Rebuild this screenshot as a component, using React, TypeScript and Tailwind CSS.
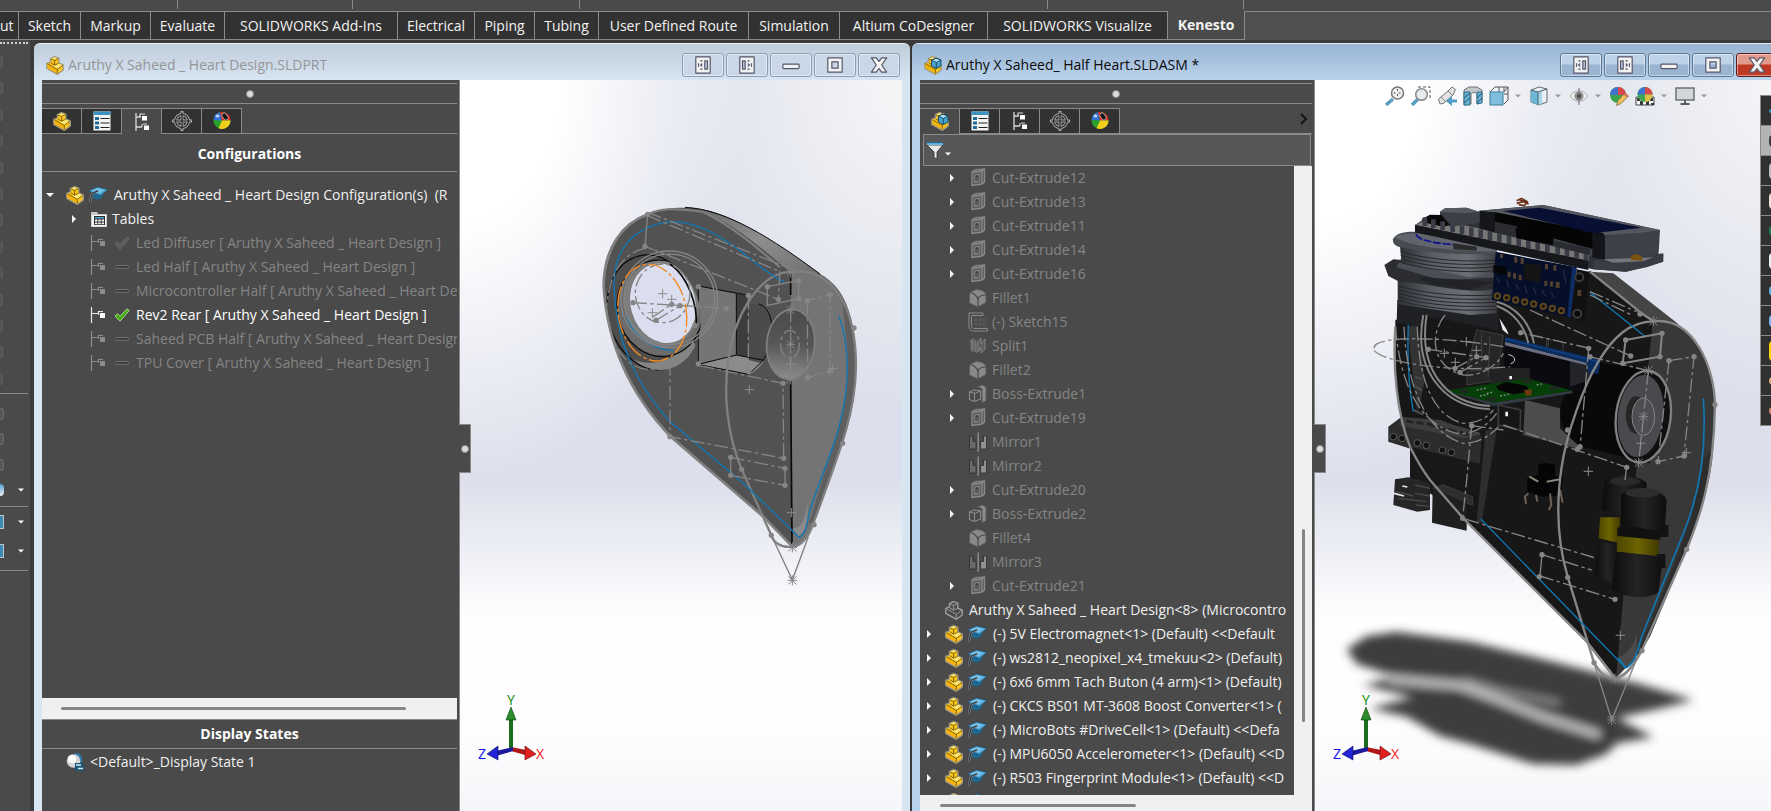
import clsx from 'clsx';
import React from 'react';

// ---------- Types ----------

type IconKind = 'cut' | 'fillet' | 'sketch' | 'split' | 'boss' | 'mirror';

interface Feature {
  name: string;
  icon: IconKind;
  open?: boolean; // has an expand arrow
}

interface Config {
  name: string;
  state: 'off' | 'built' | 'active';
}

// ---------- Data ----------

const ribbonTabs = [
  { label: 'ut', width: 'w-[19px]' },
  { label: 'Sketch', width: 'w-[62px]' },
  { label: 'Markup', width: 'w-[70px]' },
  { label: 'Evaluate', width: 'w-[74px]' },
  { label: 'SOLIDWORKS Add-Ins', width: 'w-[173px]' },
  { label: 'Electrical', width: 'w-[77px]' },
  { label: 'Piping', width: 'w-[60px]' },
  { label: 'Tubing', width: 'w-[64px]' },
  { label: 'User Defined Route', width: 'w-[150px]' },
  { label: 'Simulation', width: 'w-[91px]' },
  { label: 'Altium CoDesigner', width: 'w-[148px]' },
  { label: 'SOLIDWORKS Visualize', width: 'w-[180px]' },
];

const configs: Config[] = [
  { name: 'Led Diffuser', state: 'built' },
  { name: 'Led Half', state: 'off' },
  { name: 'Microcontroller Half', state: 'off' },
  { name: 'Rev2 Rear', state: 'active' },
  { name: 'Saheed PCB Half', state: 'off' },
  { name: 'TPU Cover', state: 'off' },
];

const features: Feature[] = [
  { name: 'Cut-Extrude12', icon: 'cut', open: true },
  { name: 'Cut-Extrude13', icon: 'cut', open: true },
  { name: 'Cut-Extrude11', icon: 'cut', open: true },
  { name: 'Cut-Extrude14', icon: 'cut', open: true },
  { name: 'Cut-Extrude16', icon: 'cut', open: true },
  { name: 'Fillet1', icon: 'fillet' },
  { name: '(-) Sketch15', icon: 'sketch' },
  { name: 'Split1', icon: 'split' },
  { name: 'Fillet2', icon: 'fillet' },
  { name: 'Boss-Extrude1', icon: 'boss', open: true },
  { name: 'Cut-Extrude19', icon: 'cut', open: true },
  { name: 'Mirror1', icon: 'mirror' },
  { name: 'Mirror2', icon: 'mirror' },
  { name: 'Cut-Extrude20', icon: 'cut', open: true },
  { name: 'Boss-Extrude2', icon: 'boss', open: true },
  { name: 'Fillet4', icon: 'fillet' },
  { name: 'Mirror3', icon: 'mirror' },
  { name: 'Cut-Extrude21', icon: 'cut', open: true },
];

const components = [
  '(-) 5V Electromagnet<1> (Default) <<Default',
  '(-) ws2812_neopixel_x4_tmekuu<2> (Default)',
  '(-) 6x6 6mm Tach Buton (4 arm)<1> (Default)',
  '(-) CKCS BS01 MT-3608 Boost Converter<1> (',
  '(-) MicroBots #DriveCell<1> (Default) <<Defa',
  '(-) MPU6050 Accelerometer<1> (Default) <<D',
  '(-) R503 Fingerprint Module<1> (Default) <<D',
];

// ---------- Icons ----------

const PartIcon: React.FC<{ gray?: boolean; assembly?: boolean }> = ({ gray, assembly }) => (
  <svg viewBox="0 0 18 19" className="h-[19px] w-[18px] shrink-0" strokeLinejoin="round">
    <path
      d="M4.500 2.600 8.500.7l4.300 1.500v5L17.200 9v5L11.400 18.300.8 12.300V7.300l3.700-1.400z"
      fill={gray ? '#4a4a4a' : '#f8c51c'}
      stroke={gray ? '#a0a0a0' : '#a39a80'}
      strokeWidth="1.400"
    />
    {!gray && <path d="M1.500 8l9.700 5.600v3.700L1.500 11.900z" fill="#f3b50c" />}
    {!gray && <path d="M4.800 2.800 8.600 1.200l3.700 1.200-3.700 1.900zM8.600 9l4-1.400 3.900 1.700-5.200 3.500L6 10z" fill="#ffe873" />}
    <path
      d="M4.800 2.900 8.600 4.400v4.800L5 7M8.600 4.400l3.900-2M8.600 9.200l4-1.800M1.400 7.700l9.900 5.600 5.500-4M11.300 13.300v4.200"
      fill="none"
      stroke={gray ? '#a0a0a0' : '#7d5a00'}
      strokeWidth=".9"
    />
    {assembly && (
      <g stroke="#12435c" strokeWidth=".9">
        <path d="M7.500 4.200 12 2.200l5 1.800v6l-4.700 2.600-4.800-2.600z" fill="#4aa3cf" />
        <path d="M7.500 4.200 12 2.200l5 1.800-4.600 2.400z" fill="#b2e0f3" />
        <path d="M12.300 6.400v6" fill="none" />
      </g>
    )}
  </svg>
);

const CapIcon = () => (
  <svg viewBox="0 0 20 18" className="h-[18px] w-5 shrink-0" strokeLinejoin="round">
    <path d="M5.500 7 5 12c2.500 2 6.500 2 9-.5l1.500-5z" fill="#1f6690" />
    <path d="M.5 5 9.500 1l10.300 2.500L12.500 9.500z" fill="#4ba4d4" stroke="#1a4b68" strokeWidth=".6" />
    <path d="M3 4.800 9.600 2l7 1.700L12 7.500z" fill="#74c0e6" />
    <path d="M10 4.800 4 7.500 2 16.500" fill="none" stroke="#9a9a9a" strokeWidth="2.200" />
    <path d="M10 4.800 4 7.500 2 16.500" fill="none" stroke="#142c3a" strokeWidth="1.100" />
  </svg>
);

const TablesIcon = () => (
  <svg viewBox="0 0 18 18" className="h-[18px] w-[18px] shrink-0">
    <path d="M1 2h6l1 2h9v13H1z" fill="#c9c9c9" />
    <path d="M2 5h14v11.500H2z" fill="#f7f7f7" />
    <rect x="4" y="6" width="11" height="9" fill="#2b2b2b" />
    <path d="M5 7h9v1.500H5z" fill="#4ba4d4" />
    <path d="M5 9.500h2.400v2H5zM8.300 9.500h2.400v2H8.300zM11.600 9.500H14v2h-2.400zM5 12.400h2.400v1.800H5zM8.300 12.400h2.400v1.800H8.300zM11.600 12.400H14v1.800h-2.400z" fill="#fff" />
  </svg>
);

const BranchIcon: React.FC<{ active: boolean }> = ({ active }) => (
  <svg viewBox="0 0 16 18" className="h-[18px] w-4 shrink-0">
    <path d="M1.500 1v16M2 7.500h6" stroke={active ? '#e8e8e8' : '#8c8c8c'} strokeWidth="1.200" />
    <path d="M8.500 9V5.500H13" fill="none" stroke={active ? '#e8e8e8' : '#8c8c8c'} strokeWidth="1.200" />
    <rect x="10" y="7" width="5" height="5" fill={active ? '#fff' : '#8c8c8c'} />
  </svg>
);

const StateIcon: React.FC<{ state: Config['state'] }> = ({ state }) => (
  <svg viewBox="0 0 16 16" className="h-4 w-4 shrink-0">
    {state === 'off' && <rect x="1.500" y="6.500" width="13" height="3" rx="1" fill="#3f3f3f" stroke="#6e6e6e" />}
    {state !== 'off' && (
      <path
        d="M1 9l2.500-2.300L6 9.300 13 1.800l2.200 1.700L6 14.300z"
        fill={state === 'active' ? '#3fae0c' : '#5a5a5a'}
        stroke={state === 'active' ? '#b8dca4' : '#6c6c6c'}
        strokeWidth=".9"
      />
    )}
  </svg>
);

const PropertyIcon = () => (
  <svg viewBox="0 0 18 20" className="h-5 w-[18px]">
    <path d="M.5.500h17v19H.5z" fill="#f4f4f4" />
    <path d="M.5.500h17v3.500H.5z" fill="#3c93c2" />
    <path d="M2 6h4v3H2zM2 10.500h4v3H2zM2 15h4v3H2z" fill="#1c6c98" />
    <path d="M7.500 7.500h9M7.500 12h9M7.500 16.500h9" stroke="#222" strokeWidth="1.200" />
  </svg>
);

const ConfigIcon = () => (
  <svg viewBox="0 0 16 20" className="h-5 w-4">
    <path d="M2 1v18M2 5h5M2 15h6" stroke="#d8d8d8" strokeWidth="1.300" fill="none" />
    <path d="M6 5V2h5M9 12h4M8 15v-3" stroke="#d8d8d8" strokeWidth="1.200" fill="none" />
    <path d="M8 4h5v4.500H8zM10 13.500h5V18h-5z" fill="#fff" />
  </svg>
);

const TargetIcon = () => (
  <svg viewBox="0 0 20 20" className="h-5 w-5" fill="none">
    <circle cx="10" cy="10" r="6.500" stroke="#a6a6a6" strokeWidth="3.200" />
    <path d="M10 0v20M0 10h20" stroke="#a6a6a6" strokeWidth="3" />
    <circle cx="10" cy="10" r="6.500" stroke="#222" strokeWidth="1.200" />
    <path d="M10 1.500v17M1.500 10h17" stroke="#222" strokeWidth="1.200" />
  </svg>
);

const BallIcon = () => (
  <svg viewBox="0 0 20 20" className="h-5 w-5">
    <circle cx="10" cy="9.500" r="8.500" fill="#2aa22a" />
    <path d="M10 9.500 8 1.200A8.500 8.500 0 0 0 1.500 9z" fill="#2f6fd6" />
    <path d="M10 9.500 8 1.200a8.500 8.500 0 0 1 10.500 8z" fill="#e02020" />
    <path d="M10 9.500h8.500a8.500 8.500 0 0 1-12 7.700z" fill="#f2cf1b" />
    <ellipse cx="13" cy="5.500" rx="2.500" ry="4" transform="rotate(-38 13 5.500)" fill="#161616" stroke="#eee" strokeWidth=".6" />
    <ellipse cx="5.500" cy="5" rx="2" ry="1.500" fill="#fff" opacity=".7" />
  </svg>
);

const StateBallIcon = () => (
  <svg viewBox="0 0 18 19" className="h-[19px] w-[18px] shrink-0">
    <path d="M8 1.500c5-2 9 2 8 8l-4 3z" fill="#2d7ca6" />
    <circle cx="7.500" cy="9" r="6.800" fill="#d5d5d5" />
    <circle cx="6" cy="7" r="4" fill="#fff" />
    <path d="M9 11h8.500v8H9z" fill="#1c5674" />
    <path d="M10 13h5M12 16.500h5" stroke="#d3eefb" strokeWidth="1.500" />
  </svg>
);

const FilterIcon = () => (
  <svg viewBox="0 0 18 19" className="h-[19px] w-[18px]">
    <path d="M1 4h16l-6 7v7l-3-1.500V11z" fill="#e8e8e8" stroke="#2e2e2e" strokeWidth=".8" />
    <path d="M1 1h16v3H1z" fill="#69b9df" />
    <path d="M1 1h16v1.200H1z" fill="#1d6e98" />
  </svg>
);

const FeatureIcon: React.FC<{ kind: IconKind }> = ({ kind }) => (
  <svg viewBox="0 0 20 20" className="h-5 w-5 shrink-0" fill="none" stroke="#8a8a8a" strokeLinejoin="round">
    {kind === 'cut' && (
      <>
        <path d="M4 4.500 14 3v13L4 17.500zM4 4.500l3-2.700 9.500-1V14L14 16M14 3l2.500-2" fill="#5c5c5c" strokeWidth="1.300" />
        <path d="M6.800 7 11.200 6.300v7l-4.400.8z" fill="#3a3a3a" strokeWidth="1.200" />
        <path d="M9 9v5" stroke="#7a7a7a" strokeWidth="1" />
      </>
    )}
    {kind === 'fillet' && (
      <>
        <path d="M1.500 4.500 8 1.500c5 0 10 2 10 6v7L10 19l-8.500-4z" fill="#8a8a8a" stroke="#5d5d5d" />
        <path d="M10 19V12c0-3 3-5 8-5M10 12C9 7 6 5 1.500 4.500" stroke="#474747" strokeWidth="1.200" />
      </>
    )}
    {kind === 'sketch' && (
      <>
        <path d="M8 4v12M12 4v12M16 5v11M4 8h15M4 12h15" stroke="#616161" strokeWidth=".8" />
        <path d="M15 1H1v13c0 3.500 1.500 5 4.500 5H19.500v-2.500H6.500c-2 0-3-1-3-3V3.500H15z" fill="#4a4a4a" strokeWidth="1" />
      </>
    )}
    {kind === 'split' && (
      <>
        <path d="M2 4l4-2v13l-3 1zM6 3l3 2v13l-3-3" fill="#777" stroke="#5a5a5a" strokeWidth=".9" />
        <path d="M10 5l3-3v6l4-5v10l-4 4v-6l-3 5z" fill="#5c5c5c" strokeWidth=".9" />
      </>
    )}
    {kind === 'boss' && (
      <>
        <path d="M9 3l5-2 4 2v14l-4 1.500V4.500z" fill="#8a8a8a" stroke="#5a5a5a" />
        <path d="M1.500 8l5-2 6 1v8l-6 2.500-5-2z" fill="#484848" strokeWidth="1.100" />
        <path d="M1.500 8l5 1.500 6-2.500M6.500 9.500v8" strokeWidth="1.100" />
      </>
    )}
    {kind === 'mirror' && (
      <>
        <path d="M1.500 4v13H8V9.500H5V4z" fill="#6a6a6a" stroke="#333" strokeWidth=".9" />
        <path d="M18.500 4v13H12.500V9.500h3V4z" fill="#909090" stroke="#333" strokeWidth=".9" />
        <path d="M10.200.500v19" strokeWidth="1.500" />
      </>
    )}
  </svg>
);

const Expander: React.FC<{ down?: boolean; hidden?: boolean }> = ({ down, hidden }) => (
  <svg viewBox="0 0 8 10" className={clsx('h-2.5 w-2 shrink-0', hidden && 'invisible')}>
    <path d={down ? 'M0 3h8L4 7z' : 'M2 1l4 4-4 4z'} fill="#f5f5f5" />
  </svg>
);

const Caret: React.FC<{ color: string }> = ({ color }) => (
  <svg viewBox="0 0 6 4" className="h-1 w-1.5 shrink-0">
    <path d="M0 .5h6l-3 3z" fill={color} />
  </svg>
);

// ---------- Window chrome ----------

const captionIcons: Record<string, React.ReactNode> = {
  'Dock left': (
    <>
      <path d="M3 1h16v18H3z" />
      <path d="M13 5.500h3v9h-3z" fill="#b8c8dc" />
      <path d="M10.500 5.500H8M6 8v4M8 14.500h2.500" fill="none" />
      <path d="M10 7.500v5L7.500 10z" fill="#55566b" stroke="none" />
    </>
  ),
  'Dock right': (
    <>
      <path d="M3 1h16v18H3z" />
      <path d="M6 5.500h3v9H6z" fill="#b8c8dc" />
      <path d="M11.500 5.500H14M16 8v4M14 14.500h-2.500" fill="none" />
      <path d="M12 7.500v5l2.500-2.500z" fill="#55566b" stroke="none" />
    </>
  ),
  Minimize: <rect x="2" y="9" width="18" height="5" rx="1" />,
  Maximize: <path fillRule="evenodd" d="M3 2h16v16H3zM7.500 6.500v7h7v-7z" />,
  Close: <path d="M2.500 2h5.500L11 6l3-4h5.500l-5.500 8 5.500 8H14l-3-4-3 4H2.500L8 10z" />,
};

const Caption: React.FC<{ title: string; active?: boolean }> = ({ title, active }) => (
  <header
    className={clsx(
      'flex h-[37px] shrink-0 items-center rounded-t-md border-t pt-1.5',
      active
        ? 'border-[#dfeaf6] bg-linear-to-b from-[#98b4d2] to-[#bad3ec]'
        : 'border-[#eef3f8] bg-linear-to-b from-[#bfcddb] to-[#d7e5f3]',
    )}
  >
    <div className="flex min-w-0 flex-1 items-center gap-1 pl-3">
      <PartIcon assembly={active} />
      <h2 className={clsx('truncate text-sm', active ? 'text-[#0a0a0a]' : 'text-[#959595]')}>{title}</h2>
    </div>
    <div className="flex gap-0.5 pr-2.5">
      {Object.entries(captionIcons).map(([name, shape]) => (
        <button
          key={name}
          aria-label={name}
          className={clsx(
            'flex h-6 w-[42px] items-center justify-center rounded-[3px] border shadow-[inset_0_0_0_1px_rgba(255,255,255,0.45)]',
            !active && 'border-[#8c9db8] bg-[#c9d7e6]',
            active && name !== 'Close' && 'border-[#5f7896] bg-linear-to-b from-[#bed2e8] from-45% to-[#9ab4d2] to-50%',
            active && name === 'Close' && 'border-[#5e1a1a] bg-linear-to-b from-[#e09a8c] from-45% to-[#bf3a24] to-50%',
          )}
        >
          <svg viewBox="0 0 22 20" className="h-[18px] w-5" fill="#f2f2f2" stroke="#55566b" strokeWidth="1.300" strokeLinejoin="round">
            {shape}
          </svg>
        </button>
      ))}
    </div>
  </header>
);

const ManagerTabs: React.FC<{ selected: number; assembly?: boolean }> = ({ selected, assembly }) => {
  const tabs = [
    <PartIcon assembly={assembly} />,
    <PropertyIcon />,
    <ConfigIcon />,
    <TargetIcon />,
    <BallIcon />,
  ];
  const names = ['Feature tree', 'Properties', 'Configurations', 'Dimensions', 'Appearances'];
  return (
    <div className="mr-0.5 flex items-end border-b border-[#8a8a8a]">
      {tabs.map((icon, i) => (
        <button
          key={names[i]}
          aria-label={names[i]}
          className={clsx(
            '-mb-px flex h-[26px] w-10 items-center justify-center border-t border-r border-[#8a8a8a]',
            i === selected ? 'bg-[#4a4a4a]' : 'border-b bg-[#323232]',
          )}
        >
          {icon}
        </button>
      ))}
      {assembly && (
        <button aria-label="More tabs" className="mr-1 mb-2 ml-auto">
          <svg viewBox="0 0 8 12" className="h-3 w-2" fill="none" stroke="#141414" strokeWidth="2">
            <path d="M1 1l5 5-5 5" />
          </svg>
        </button>
      )}
    </div>
  );
};

const Knob = () => <span className="h-2 w-2 rounded-full border border-[#8e8e8e] bg-[#dcdcdc]" />;

const PanelGrip = () => (
  <div className="mt-[3px] mr-0.5 mb-1 flex h-[21px] shrink-0 items-center justify-center border-y border-[#8a8a8a]">
    <Knob />
  </div>
);

const SideHandle = () => (
  <button
    aria-label="Collapse panel"
    className="absolute top-[344px] -left-px flex h-[49px] w-3 items-center justify-center border border-l-0 border-[#8a8a8a] bg-[#4a4a4a]"
  >
    <Knob />
  </button>
);

// ---------- Drawing helpers ----------

const Dots: React.FC<{ at: number[][] }> = ({ at }) => (
  <g fill="#858585">
    {at.map(([x, y]) => (
      <circle key={`${x}-${y}`} cx={x} cy={y} r="8" />
    ))}
  </g>
);

const Crosses: React.FC<{ at: number[][] }> = ({ at }) => (
  <g stroke="#8c8c8c" strokeWidth="3">
    {at.map(([x, y]) => (
      <path key={`${x}-${y}`} d={`M${x - 14} ${y}h28M${x} ${y - 14}v28`} />
    ))}
  </g>
);

const Stars: React.FC<{ at: number[][] }> = ({ at }) => (
  <g stroke="#858585" strokeWidth="3">
    {at.map(([x, y]) => (
      <path key={`${x}-${y}`} d={`M${x - 14} ${y}h28M${x} ${y - 15}v30M${x - 12} ${y - 12}l24 24M${x + 12} ${y - 12}l-24 24`} />
    ))}
  </g>
);

// Axis letters with the arrows between them
const AxisTriad = () => (
  <div className="absolute bottom-[50px] left-[18px] grid grid-cols-[8px_50px_8px] text-sm leading-none">
    <span className="col-start-2 justify-self-center text-[#0a8a0a]">Y</span>
    <span className="col-start-1 row-start-2 self-end text-[#1414f0]">Z</span>
    <svg viewBox="0 0 50 54" className="col-start-2 row-start-2 h-[54px] w-[50px]">
      <path d="M23 10h4v34h-4z" fill="#1b6e1b" />
      <path d="M25 0l5 13H20z" fill="#2a8c2a" stroke="#0c3d0c" strokeWidth=".6" />
      <path d="M25 40l15 3-1 5-14-4z" fill="#b01616" />
      <path d="M39 39l11 8-11 6z" fill="#e32020" stroke="#5a0d0d" strokeWidth=".6" />
      <path d="M27 40 10 44v5l17-5z" fill="#1a1a9c" />
      <path d="M12 39 1 47l11 6z" fill="#2323d8" stroke="#0b0b55" strokeWidth=".6" />
    </svg>
    <span className="col-start-3 row-start-2 self-end text-[#f01414]">X</span>
  </div>
);

// Heart half opened in the part window
const HeartModel = () => (
  <svg viewBox="0 0 1020 1260" className="absolute top-[100px] left-[100px] h-[420px] w-[340px]" fill="none">
    <defs>
      <linearGradient id="bevel" x1="0" y1="0" x2="1" y2="1">
        <stop offset="0" stopColor="#6a6a6a" />
        <stop offset=".5" stopColor="#8e8e8e" />
        <stop offset="1" stopColor="#6f6f6f" />
      </linearGradient>
      <linearGradient id="bore" x1="0" y1="0" x2="0" y2="1">
        <stop offset="0" stopColor="#4a4a4a" />
        <stop offset=".5" stopColor="#565656" />
        <stop offset="1" stopColor="#8d8d8d" />
      </linearGradient>
      <clipPath id="ring">
        <ellipse cx="285" cy="400" rx="135" ry="172" transform="rotate(-14 285 400)" />
      </clipPath>
    </defs>

    {/* body */}
    <path
      d="M263 103C300 86 340 82 400 84C500 90 640 180 780 282C850 320 888 400 888 560C888 700 850 790 760 1030C740 1075 725 1098 697 1100L610 1010L330 768C200 630 140 460 131 320C140 200 190 130 263 103Z"
      fill="#525252"
    />
    <path d="M400 84C500 90 640 180 780 282L690 275C620 220 540 140 430 96Z" fill="url(#bevel)" />
    <path d="M375 82C500 88 640 178 780 282" stroke="#0a0a0a" strokeWidth="3" />
    <path d="M692 275C790 265 888 330 888 560C888 700 850 790 760 1030C740 1075 725 1098 697 1100Z" fill="#747474" />
    <path d="M862 500C868 640 850 720 800 860C770 950 760 1000 745 1030L760 1030C850 790 888 700 888 560C888 470 870 400 845 350Z" fill="#5f5f5f" />
    <path d="M697 1045C725 1045 735 1020 745 960L740 1040L716 1070Z" fill="#8b8b8b" />

    {/* pocket and wall */}
    <path d="M415 318L529 342V525L415 553Z" fill="#757575" />
    <path d="M529 342L566 348L566 575L529 525Z" fill="#3d3d3d" />
    <path d="M529 525L612 541C600 565 580 578 566 583L420 553Z" fill="#8b8b8b" />
    <path d="M566 372H596C660 400 645 520 600 548L566 540Z" fill="#4b4b4b" />
    <path d="M596 372C650 385 645 500 603 548L566 583" stroke="#0a0a0a" strokeWidth="3" />
    <path d="M529 342V525L415 553V318L566 346M529 525L612 541M420 555L566 583" stroke="#0a0a0a" strokeWidth="3" />
    <ellipse cx="692" cy="493" rx="72" ry="105" transform="rotate(5 692 493)" fill="url(#bore)" stroke="#808080" strokeWidth="5" />

    {/* lens bore */}
    <ellipse cx="278" cy="397" rx="134" ry="174" transform="rotate(-14 278 397)" fill="#4d4d4d" stroke="#0a0a0a" strokeWidth="4" />
    <g clipPath="url(#ring)">
      <path d="M190 520C240 565 330 560 400 480L420 540L320 600L200 560Z" fill="#848484" />
      <ellipse cx="300" cy="385" rx="128" ry="145" transform="rotate(-12 300 385)" fill="#6c6c6c" stroke="#0a0a0a" strokeWidth="4" />
      <ellipse cx="305" cy="372" rx="112" ry="130" transform="rotate(-10 305 372)" fill="#7d7d7d" />
    </g>
    <ellipse cx="309" cy="370" rx="97" ry="121" transform="rotate(-16 309 370)" fill="#dadeee" />
    <path d="M330 252C385 290 415 380 408 440" stroke="#0a0a0a" strokeWidth="5" />
    <path d="M198 400C215 470 270 505 340 512" stroke="#0f77b4" strokeWidth="4" />

    {/* outline */}
    <path d="M263 103C190 130 131 200 131 320C140 460 190 620 330 768L610 1010L697 1100" stroke="#808080" strokeWidth="8" />
    <path d="M263 103C300 86 340 82 430 96C520 140 600 210 660 262" stroke="#808080" strokeWidth="6" />
    <path d="M692 275C820 260 888 380 888 560C886 690 850 790 760 1030C745 1075 720 1100 697 1100C660 1105 640 1085 634 1066L545 868C500 760 490 640 505 540C520 420 590 280 692 275" stroke="#808080" strokeWidth="7" />
    <path d="M692 275V345M692 600L696 1092" stroke="#0a0a0a" strokeWidth="5" />
    <path d="M634 1066L697 1200L745 1070" stroke="#808080" strokeWidth="4" />

    {/* blue spline */}
    <path
      d="M675 308C600 270 560 220 500 185C420 130 340 110 270 140C200 170 160 230 162 320C168 470 210 590 330 725L550 910L690 1045L716 1072C735 1065 738 1050 750 990C790 860 862 740 862 560C860 490 850 440 836 408"
      stroke="#0f77b4"
      strokeWidth="4"
    />

    {/* sketch geometry */}
    <g stroke="#858585" strokeWidth="4">
      <circle cx="328" cy="358" r="136" />
      <circle cx="328" cy="358" r="145" />
      <path d="M263 103L255 199M622 320L716 302V356L622 376ZM512 832V886M675 865V916" />
      <g strokeDasharray="42 10 10 10">
        <path d="M263 97L690 265M263 107L660 275M255 199L655 358M330 545V770L671 835L669 610L415 556M512 832L675 865M512 886L675 916M565 346V580M660 272L655 358M742 362L743 593L810 574V344L742 362M330 545C260 600 160 560 140 400C140 300 180 220 255 205M692 385V600M219 368L499 385M277 412L335 373M288 421L360 377" />
        <ellipse cx="308" cy="340" rx="82" ry="88" />
        <ellipse cx="690" cy="493" rx="28" ry="42" />
      </g>
    </g>
    <ellipse cx="277" cy="398" rx="102" ry="146" transform="rotate(-10 277 398)" stroke="#f58a1f" strokeWidth="4" strokeDasharray="60 8 10 8" />
    <Dots at={[[263, 103], [255, 199], [565, 346], [655, 358], [622, 320], [716, 302], [716, 356], [330, 545], [330, 770], [671, 835], [669, 610], [512, 832], [512, 886], [675, 865], [675, 916], [545, 868], [634, 1066], [762, 1034], [848, 790], [882, 444], [742, 362], [743, 593], [810, 574], [810, 344], [219, 368], [360, 377], [335, 373], [288, 421], [405, 436], [499, 385], [415, 320], [415, 552], [566, 575]]} />
    <Crosses at={[[308, 341], [335, 358], [277, 398], [568, 629], [692, 553], [694, 998], [818, 566]]} />
    <Stars at={[[692, 278], [691, 390], [691, 493], [691, 598], [697, 1102], [697, 1201]]} />
  </svg>
);

// Full assembly with its electronics and floor shadow
const AssemblyModel = () => (
  <svg viewBox="0 0 1323 1893" className="absolute top-[100px] left-[15px] h-[631px] w-[441px]" fill="none">
    <defs>
      <filter id="soft" x="-10%" y="-20%" width="120%" height="140%">
        <feGaussianBlur stdDeviation="14" />
      </filter>
      <linearGradient id="steel" x1="0" y1="0" x2="1" y2="0">
        <stop offset="0" stopColor="#2f3136" />
        <stop offset=".35" stopColor="#5b5e66" />
        <stop offset=".7" stopColor="#6d6f76" />
        <stop offset="1" stopColor="#3c3e44" />
      </linearGradient>
      <linearGradient id="can" x1="0" y1="0" x2="1" y2="0">
        <stop offset="0" stopColor="#0c0c0c" />
        <stop offset=".5" stopColor="#242424" />
        <stop offset="1" stopColor="#0e0e0e" />
      </linearGradient>
      <linearGradient id="band" x1="0" y1="0" x2="1" y2="0">
        <stop offset="0" stopColor="#4c4600" />
        <stop offset=".5" stopColor="#6e6500" />
        <stop offset="1" stopColor="#3f3a00" />
      </linearGradient>
    </defs>

    {/* floor shadow */}
    <g filter="url(#soft)">
      <path
        d="M50 1408L110 1368L200 1355L420 1385L600 1428L800 1478L940 1515L1090 1560L980 1588L860 1614L970 1672L860 1690L830 1722L740 1755L610 1752L420 1692L330 1668L230 1610L120 1585L250 1552L100 1515L200 1490L80 1452Z"
        fill="#3e3e3e"
      />
      <path d="M180 1496L300 1508L390 1516L500 1556L640 1612L810 1665" stroke="#c6c6c6" strokeWidth="24" />
      <path d="M400 1500L520 1535L690 1570" stroke="#8c8c8c" strokeWidth="18" />
    </g>

    {/* body */}
    <path d="M780 273L1040 430L1000 900L860 1495L770 1380L400 1015L300 900C240 800 196 700 196 560V420L500 350L640 330Z" fill="#171717" />
    <path d="M780 275L850 280L1045 432L968 424Z" fill="#454545" />
    <path d="M968 424C1090 410 1155 560 1155 680C1150 900 1110 1010 1070 1108L935 1412L858 1495L880 1250L920 860L955 560Z" fill="#383838" />
    <path d="M1120 840C1100 1010 1010 1210 940 1380L922 1430L960 1370L1070 1108C1110 1010 1145 900 1150 800Z" fill="#2d2d2d" />
    <path d="M868 1430C900 1420 910 1390 922 1360L918 1440L885 1464Z" fill="#4a4a4a" />
    <path d="M585 660L690 685V745L760 810L580 765Z" fill="#4c4c4c" />
    <path d="M232 440L262 435L285 600L262 700Z" fill="#333" />
    <path d="M467 750L500 750L455 1030L440 1025Z" fill="#2e2e2e" />

    {/* inside of the lens bore */}
    <path d="M440 450L520 465L500 600L410 615L412 560Z" fill="#262626" stroke="#3d3d3d" strokeWidth="3" />
    <path d="M455 460v70M480 470l-6 120M420 570h90M610 465l40 10v28l-38-8zM655 478l44 8v30l-44-8z" stroke="#444" strokeWidth="3" />
    <path d="M255 590l20 8M258 620l18 12M250 690l30 14M300 720l60 24M380 740l70 22" stroke="#4c4c4c" strokeWidth="6" />

    {/* terminal blocks */}
    <path d="M175 740L215 710L330 720L455 770L450 850L380 850L175 785Z" fill="#2c2c2c" />
    <path d="M215 712L330 720L455 765L400 775L205 735Z" fill="#3d3d3d" />
    <path d="M230 722l20 6M260 726l20 6M290 730l24 8M325 740l20 8M355 748l24 8M390 756l24 8" stroke="#232323" strokeWidth="9" />
    <g fill="#111" stroke="#5a5a5a" strokeWidth="3">
      <circle cx="190" cy="770" r="10" />
      <circle cx="216" cy="775" r="10" />
      <circle cx="262" cy="789" r="10" />
      <circle cx="289" cy="796" r="10" />
      <circle cx="337" cy="810" r="10" />
      <circle cx="364" cy="817" r="10" />
    </g>
    <path d="M240 800L440 850L420 1020L240 900Z" fill="#181818" />
    <path d="M195 898L235 892L300 910V990L262 995L190 975Z" fill="#262626" />
    <path d="M200 935L250 948M205 955L290 965M255 915l45 10M255 940l45 8M258 975l40 4" stroke="#4a4a4a" strokeWidth="4" />
    <path d="M217 918L232 921M192 940l30 8" stroke="#e9e9e9" strokeWidth="5" />
    <path d="M308 925L410 945V1052L306 1028Z" fill="#1f1f1f" />
    <path d="M308 925L340 915L428 950V975L410 970" fill="#2e2e2e" stroke="#484848" strokeWidth="2" />

    {/* fingerprint module */}
    <path d="M202 360L505 365L505 450L280 405L275 440L200 428Z" fill="#202125" />
    <path d="M203 300L497 320L500 400L420 405L203 372Z" fill="url(#steel)" />
    <path d="M163 255L190 238L330 250L500 280V325C440 345 330 320 260 310L205 304L175 288Z" fill="#2b2d31" />
    <path d="M205 248L500 262L497 292L400 298L330 300L200 262Z" fill="#4b4e55" />
    <path d="M260 290L400 300L495 305L420 330L300 312Z" fill="#212327" />
    <path d="M210 200L500 215V282L420 292L215 250Z" fill="url(#steel)" />
    <g stroke="#25272b" strokeWidth="3">
      <path d="M212 215C300 240 400 248 500 240M212 226C300 252 400 258 500 250M212 237C300 262 400 270 500 260M214 248C300 272 400 280 500 272" />
      <path d="M205 318C300 345 400 350 498 345M205 329C300 356 400 362 498 356M205 340C300 368 400 372 498 367M205 351C300 378 400 382 498 378M207 362C300 388 400 394 498 389" />
    </g>
    <path d="M189 178C200 150 260 150 330 165L500 205V222C400 225 300 220 205 200C192 195 188 188 189 178Z" fill="#484b52" />
    <path d="M195 172C230 150 300 160 500 205V215C400 215 250 205 195 172Z" fill="#62656d" />
    <path d="M258 163C262 178 300 188 370 194" stroke="#0c0c90" strokeWidth="5" strokeDasharray="24 5" />
    <path d="M370 190L440 200V212L370 208Z" fill="#2b2b2b" />

    {/* controller board */}
    <path d="M255 135L300 105L460 130L790 200L1000 225L998 245L890 275L790 268L255 155Z" fill="#2f3138" />
    <path d="M255 135L300 115L780 215L775 242Z" fill="#777" />
    <path d="M255 135L775 242V270L255 157Z" fill="#17181b" />
    <path d="M330 95L345 85L410 83L447 95V130L360 140L330 110Z" fill="#3b3e46" />
    <path d="M330 95L345 85L410 83L447 95L400 100Z" fill="#565962" />
    <path d="M275 118L300 104L335 105L360 135L340 140L285 128Z" fill="#090909" />
    <g fill="#3a3d45">
      {[285, 310, 338, 368, 396, 424, 452, 480, 508, 537, 566, 595, 623, 652, 683, 711, 740, 768].map((x, i) => (
        <path key={x} d={`M${x - 7} ${112 + i * 6}h14v26h-14z`} />
      ))}
    </g>
    <path d="M448 92L640 75L990 150L985 235L825 238L448 140Z" fill="#3d4049" />
    <path d="M448 92L495 97V158L448 145Z" fill="#15161a" />
    <path d="M448 92L640 75L990 150L935 158L825 165L495 97Z" fill="#54575f" />
    <path d="M495 97L820 160V215L495 128Z" fill="#050505" />
    <path d="M520 93L630 83L935 143L790 160Z" fill="#070f33" />
    <path d="M495 125L560 138V160L780 205V225L495 158Z" fill="#2a2c31" />
    <path d="M556 145L672 165L668 195L560 175Z" fill="#050505" />
    <path d="M787 158L825 165V240L787 232Z" fill="#14151a" />
    <path d="M560 62L575 55L592 66L583 77L566 74M566 58L596 72M560 70L590 62" stroke="#6a2c15" strokeWidth="5" />
    <path d="M790 240L890 235L1000 220V245L950 262L885 275L790 268Z" fill="#393c44" />
    <path d="M820 238L970 232L940 244L850 248Z" fill="#75777b" />
    <path d="M903 240V227L920 222L935 228L938 242Z" fill="#7a5410" />

    {/* accelerometer board */}
    <path d="M497 215L740 262L718 412L486 360Z" fill="#060f28" />
    <path d="M726 262L740 265L722 412L712 410Z" fill="#0d2c66" />
    <path d="M740 268L776 275L765 425L722 415Z" fill="#101010" />
    <path d="M583 250L635 256L630 308L580 298Z" fill="#151515" />
    <path d="M490 255L528 260V284L490 278Z" fill="#070707" />
    <g fill="#4f3f30">
      <path d="M553 230h9v18h-9zM572 234h9v18h-9zM533 275h9v16h-9zM549 280h9v16h-9zM566 284h9v16h-9zM645 252h9v16h-9zM670 256h9v16h-9zM643 302h9v16h-9zM660 304h9v16h-9zM677 306h12v18h-12zM510 222h9v12h-9zM742 330h12v18h-12z" />
    </g>
    <path d="M500 292l8 14M530 298l6 24M556 312l10 16M584 318l8 22M610 322l8 22M636 330l10 18M664 336l8 18M700 270l8 40" stroke="#1e2a48" strokeWidth="4" />
    <g fill="#151005" stroke="#5c4620" strokeWidth="6">
      {[[502, 348], [530, 353], [557, 360], [584, 366], [611, 372], [640, 379], [667, 385], [694, 392]].map(([x, y]) => (
        <circle key={x} cx={x} cy={y} r="8" />
      ))}
    </g>
    <g fill="#0a0a0a" stroke="#3c3c3c" strokeWidth="6">
      <circle cx="748" cy="292" r="12" />
      <circle cx="742" cy="401" r="12" />
    </g>

    {/* magnet */}
    <path d="M790 545L965 570L960 850L760 800C690 770 680 700 700 655C720 600 760 560 790 545Z" fill="#090909" />
    <ellipse cx="940" cy="710" rx="82" ry="138" transform="rotate(7 940 710)" fill="#101010" stroke="#808080" strokeWidth="7" />
    <ellipse cx="932" cy="708" rx="68" ry="124" transform="rotate(7 932 708)" fill="#484a4d" />
    <ellipse cx="918" cy="705" rx="30" ry="56" fill="#262626" />
    <ellipse cx="940" cy="710" rx="34" ry="56" fill="#4c4e51" stroke="#858585" strokeWidth="3" />

    {/* boost converter and driver */}
    <path d="M525 495L765 545L755 640L620 610L520 560Z" fill="#0b0b0f" />
    <path d="M720 540L790 545L780 600L720 620Z" fill="#23242a" />
    <path d="M525 485L770 548V556L525 496Z" fill="#6b6e80" />
    <path d="M525 472L545 475L812 540L805 582L775 578L770 548L525 485Z" fill="#0b2c5c" />
    <path d="M525 476L805 545" stroke="#114488" strokeWidth="4" />
    <path d="M508 415C522 435 532 450 536 464L518 450Z" fill="#e8e8ee" />
    <path d="M535 524C555 526 562 545 542 551" stroke="#d8d8d8" strokeWidth="3" />
    <path d="M480 560L600 565V605L480 620Z" fill="#222" />
    <path d="M505 675L572 690L570 750L505 735Z" fill="#151515" stroke="#3c3c3c" strokeWidth="5" />
    <path d="M526 695h8v14h-8zM538 588h8v10h-8z" fill="#f3f3f3" />
    <path d="M345 632L590 595L727 632L490 668Z" fill="#063f08" />
    <path d="M345 632L490 668L727 632V640L490 678Z" fill="#343a44" />
    <g fill="#1d2a1f">
      <ellipse cx="402" cy="634" rx="16" ry="6" />
      <ellipse cx="590" cy="604" rx="16" ry="6" />
      <ellipse cx="484" cy="657" rx="16" ry="6" />
      <ellipse cx="672" cy="625" rx="16" ry="6" />
    </g>
    <path d="M440 630l30 -6M450 648l24 -5M620 615l20 -4M510 648l30 -6M470 640l20 -4" stroke="#7d8c7d" strokeWidth="4" strokeDasharray="6 5" />
    <path d="M498 618L530 606L590 618L598 635L550 643L505 630Z" fill="#060606" />
    <path d="M582 630L605 628V645L588 648Z" fill="#6b3a10" />

    {/* push button */}
    <path d="M592 893L625 885V852L650 849L675 854V888L700 895L690 945L640 950L592 935Z" fill="#050505" />
    <path d="M598 890L625 905L612 898M650 905L690 898" stroke="#8d857c" strokeWidth="6" />
    <path d="M595 940L585 950L588 972M618 945L622 965M660 940L664 975L656 990M690 930L698 968" stroke="#6d625a" strokeWidth="6" />

    {/* capacitors */}
    <path d="M822 908C835 880 930 880 950 910L945 1035L815 990Z" fill="url(#can)" />
    <ellipse cx="885" cy="904" rx="46" ry="12" fill="#2a2a2a" />
    <path d="M810 1012H870V1090L806 1075Z" fill="url(#band)" />
    <path d="M805 1085L870 1095L860 1215L793 1185Z" fill="url(#can)" />
    <path d="M873 945C890 915 990 915 1010 960L1005 1040L985 1072L873 1050Z" fill="url(#can)" />
    <ellipse cx="938" cy="938" rx="52" ry="14" fill="#2e2e2e" />
    <path d="M862 1062L988 1076L985 1128L860 1115Z" fill="url(#band)" />
    <path d="M862 1044L880 1036L1000 1056L988 1080L862 1068Z" fill="#111" />
    <path d="M860 1115L1000 1130L985 1235C960 1260 880 1255 845 1228Z" fill="url(#can)" />
    <path d="M985 1035h30v36h-30zM980 1122h26v42h-26z" fill="#131313" />

    {/* outlines */}
    <g stroke="#868686" strokeWidth="7">
      <path d="M196 440C188 560 200 700 240 800C270 860 285 880 300 900L400 1015L770 1385L855 1495" />
      <path d="M780 275L935 400L970 424C1090 410 1155 560 1155 680C1150 900 1110 1010 1070 1108L935 1412C915 1450 890 1490 855 1495C820 1495 805 1470 792 1448L713 1190C680 1080 680 960 695 860C710 760 760 620 805 545C850 470 900 425 970 424" />
    </g>
    <path d="M792 1448L845 1620L915 1450" stroke="#868686" strokeWidth="4" />

    {/* blue spline */}
    <path d="M780 337L948 472M453 1018L885 1462M235 435C230 560 240 640 250 695" stroke="#0f77b4" strokeWidth="4" />
    <path d="M1120 655C1130 800 1110 940 1060 1060L935 1370C920 1420 915 1450 887 1464L865 1434" stroke="#0f77b4" strokeWidth="5" />

    {/* sketch geometry */}
    <g stroke="#858585" strokeWidth="4">
      <path d="M280 405C250 560 330 680 480 688M290 405C265 560 340 670 480 678M500 365C560 380 600 430 612 490M500 378C550 395 585 440 595 490" strokeWidth="6" />
      <path d="M887 480L996 460L990 530L878 550Z" strokeWidth="6" />
      <path d="M630 1188L636 1124M890 862L885 900" />
      <g strokeDasharray="42 10 10 10">
        <path d="M780 335L920 395M780 345L905 405M600 390L902 528M780 505L572 458M778 530L955 572M520 735L890 862M425 737L410 900L398 1015L800 1135M425 737L520 750M636 1124L785 1170M630 1188L855 1258M776 505L750 805M1017 542L984 845L1062 828L1092 530L1017 542M955 572L926 848M295 508L468 533M375 565L440 530M390 577L468 533M345 405C300 460 300 560 400 585C450 590 500 560 520 520" />
        <path d="M133 505C125 470 300 465 520 500M133 512C160 545 350 580 540 560M196 440C210 600 260 730 380 760C430 765 470 740 500 700M222 440C230 620 290 760 400 790C440 790 480 770 505 740M262 440C265 600 310 710 400 730C440 730 470 715 490 690" />
      </g>
    </g>
    <Dots at={[[295, 508], [440, 530], [468, 533], [375, 565], [390, 577], [425, 737], [398, 1015], [572, 458], [776, 505], [780, 530], [713, 750], [750, 800], [742, 808], [887, 480], [996, 460], [990, 530], [878, 550], [902, 528], [930, 402], [1017, 542], [1092, 530], [1062, 828], [984, 845], [1155, 674], [890, 862], [636, 1124], [628, 1190], [713, 1192], [855, 1258], [1070, 1108], [936, 1412], [792, 1448]]} />
    <Crosses at={[[409, 485], [439, 511], [343, 520], [376, 547], [932, 790], [1069, 818], [775, 874], [871, 1366]]} />
    <Stars at={[[970, 424], [955, 572], [940, 710], [926, 848], [855, 1496], [845, 1620]]} />
  </svg>
);

// ---------- Heads-up toolbar ----------

const hud: { name: string; caret?: boolean; shape: React.ReactNode }[] = [
  {
    name: 'Zoom to fit',
    shape: (
      <>
        <path d="M1 19l7-6" stroke="#5b9fc0" strokeWidth="3.500" />
        <circle cx="12.500" cy="7" r="6" fill="#eef0f2" stroke="#777" strokeWidth="1.500" />
        <path d="M12.500 3v8M8.500 7h8" stroke="#555" strokeDasharray="2 3" />
      </>
    ),
  },
  {
    name: 'Zoom to area',
    shape: (
      <>
        <path d="M7 1h12v12" fill="none" stroke="#555" strokeDasharray="3 2" />
        <path d="M1 19l6-6" stroke="#5b9fc0" strokeWidth="3.500" />
        <circle cx="10.500" cy="8.500" r="5.800" fill="#e6eaed" stroke="#8a8a8a" strokeWidth="1.500" />
      </>
    ),
  },
  {
    name: 'Previous view',
    shape: (
      <>
        <path d="M1.500 13 11 5l4-4 3.500 2.500L16 9 7 17l-4 1z" fill="#e2e2e2" stroke="#777" />
        <path d="M11 5l4 4M4 11l4 4" stroke="#888" />
        <path d="M20 13.500h-5V10l-6 5 6 5v-3.500h5z" fill="#4f9dc4" />
      </>
    ),
  },
  {
    name: 'Section view',
    shape: (
      <>
        <path d="M1 4l5-3h8l5 3v12l-5 2V8c-1-2-5-2-6 0v10l-7 1z" fill="#c3c7ca" stroke="#707070" />
        <path d="M1 6h6v13H1zM14 6h5v11l-5 1z" fill="#69b0d2" stroke="#33708e" />
        <path d="M1 12l6-5M1 17l6-5M14 12l5-5M14 17l5-5" stroke="#24566f" />
      </>
    ),
  },
  {
    name: 'View orientation',
    caret: true,
    shape: (
      <>
        <path d="M6 1h13v13l-4 4M6 1 1 6M19 1l-4 5M10 1v5M15 1v5M15 8h4" fill="none" stroke="#555" />
        <rect x="1" y="6" width="13" height="13" fill="#7fbfdd" stroke="#3c7d9c" />
      </>
    ),
  },
  {
    name: 'Display style',
    caret: true,
    shape: (
      <>
        <path d="M2 4l8-3 8 2v13l-8 3-8-3z" fill="#eceff1" stroke="#5e6a70" />
        <path d="M2 4l7 2v13l-7-3z" fill="#6eb6d8" />
        <path d="M9 6l4-1v13l-4 1z" fill="#a8d6ea" />
        <path d="M2 4l7 2 9-3M9 6v13" fill="none" stroke="#47626f" />
      </>
    ),
  },
  {
    name: 'Hide and show items',
    caret: true,
    shape: (
      <>
        <path d="M1 10c5-7 13-7 18 0-5 7-13 7-18 0z" fill="#ececec" stroke="#ababab" />
        <circle cx="10" cy="10" r="4.500" fill="#8b8b8b" />
        <circle cx="10" cy="10" r="2" fill="#3a3a3a" />
        <path d="M10 2v17" stroke="#6a6a6a" />
      </>
    ),
  },
  {
    name: 'Edit appearance',
    shape: (
      <>
        <circle cx="9" cy="9" r="8" fill="#3aa34e" />
        <path d="M9 9V1a8 8 0 0 0-8 8z" fill="#3f74cc" />
        <path d="M9 9V1a8 8 0 0 1 8 8z" fill="#d8474a" />
        <path d="M7.500 19.500l1.500-5 7-7.500 3.500 3-7.500 7.500z" fill="#f0c35a" stroke="#7b6a4a" strokeWidth=".8" />
        <path d="M16 7l3.500 3-1.500 1.500L14.500 8.500z" fill="#d96a5c" />
      </>
    ),
  },
  {
    name: 'Apply scene',
    caret: true,
    shape: (
      <>
        <path d="M1 11h18v8H1z" fill="#f5f5f5" stroke="#444" />
        <path d="M2 12h3v3H2zM5 15h3v4H5zM11 15h3v4h-3zM15 12h3v3h-3zM16 17h3v2h-3z" fill="#3a3a3a" />
        <circle cx="10" cy="8.500" r="7.500" fill="#3fa553" />
        <path d="M10 8.500V1a7.500 7.500 0 0 0-7.500 7.500z" fill="#3f74cc" />
        <path d="M10 8.500V1a7.500 7.500 0 0 1 7.500 7.500z" fill="#d8474a" />
        <path d="M10 8.500h7.500A7.500 7.500 0 0 1 10 16z" fill="#dfc045" />
      </>
    ),
  },
  {
    name: 'View settings',
    caret: true,
    shape: (
      <>
        <rect x="1" y="2" width="18" height="12" fill="#d4d7d9" stroke="#707070" strokeWidth="1.500" />
        <path d="M10 14v3M5.500 18h9" stroke="#5c5c5c" strokeWidth="2" />
      </>
    ),
  },
];

const HeadsUpToolbar = () => (
  <div className="absolute top-1.5 left-[70px] flex items-center gap-1.5">
    {hud.map(({ name, caret, shape }) => (
      <button key={name} aria-label={name} className="flex items-center gap-1.5">
        <svg viewBox="0 0 20 20" className="h-5 w-5">
          {shape}
        </svg>
        {caret && (
          <span className="mr-0.5">
            <Caret color="#9a9a9a" />
          </span>
        )}
      </button>
    ))}
  </div>
);

const paneColors = [
  'bg-[#2f8fc0] h-1',
  'bg-[#3a3a3a] h-3',
  'bg-[#bdbdbd] h-4',
  'bg-[#e8e0d0] h-4',
  'bg-[#1c7f58] h-2.5',
  'bg-[#e6f2f8] h-4',
  'bg-[#5eb4dc] h-2.5',
  'bg-[#7db9f2] h-3',
  'bg-[#ffd200] h-5',
  'bg-[#e8b48c] h-2',
  'bg-[#d88a70] h-2',
];

const TaskPane = () => (
  <nav className="absolute top-[15px] right-0 flex w-7 flex-col border-t border-l border-[#8a8a8a]">
    {paneColors.map((color, i) => (
      <button
        key={color}
        aria-label={`Task pane ${i + 1}`}
        className={clsx('flex h-[30px] items-center border-b border-[#8a8a8a] pl-2', i === 1 ? 'bg-[#b3b3b3]' : 'bg-[#303030]')}
      >
        <span className={clsx('w-4 rounded-sm', color)} />
      </button>
    ))}
  </nav>
);

const Viewport: React.FC<{ children: React.ReactNode }> = ({ children }) => (
  <div className="relative min-w-0 flex-1 border-l border-[#8a8a8a] bg-[linear-gradient(to_bottom,transparent_55%,white_74%,#fdfdfe_90%,#f5f6f9_100%),radial-gradient(ellipse_65%_55%_at_0%_0%,white_35%,transparent_100%),radial-gradient(ellipse_55%_45%_at_100%_0%,#f3f4f6_10%,transparent_100%),linear-gradient(#dde0ec,#dde0ec)]">
    {children}
  </div>
);

// ---------- Left sketch toolbar (mostly off screen) ----------

const ToolStrip = () => (
  <aside className="flex w-[34px] shrink-0 flex-col border-r-4 border-[#3c3c3c] pt-0.5">
    <div className="mr-0.5 border-t-2 border-dotted border-[#d0d0d0]" />
    <div className="mr-0.5 flex h-[350px] flex-col justify-between border-b border-[#8a8a8a] pt-3 pb-2">
      {Array.from({ length: 13 }, (_, i) => (
        <button key={i} aria-label={`Sketch tool ${i + 1}`} className="h-3 w-[3px] rounded-r-full border border-l-0 border-[#5e5e5e] bg-[#545454]" />
      ))}
    </div>
    <div className="mr-0.5 flex h-[113px] flex-col justify-between border-b border-[#8a8a8a] pt-3.5 pb-2.5">
      {[1, 2, 3].map((i) => (
        <button key={i} aria-label={`Surface tool ${i}`} className="h-3 w-1 rounded-r-full border border-l-0 border-[#6e6e6e] bg-[#565656]" />
      ))}
      <button aria-label="Assembly tool" className="flex items-center gap-3.5">
        <span className="h-3 w-1 rounded-r-sm bg-linear-to-b from-[#4ba4d4] to-[#eee]" />
        <Caret color="#fff" />
      </button>
    </div>
    <div className="mr-0.5 flex h-16 flex-col justify-around border-b border-[#8a8a8a] pb-1">
      {[1, 2].map((i) => (
        <button key={i} aria-label={`Reference tool ${i}`} className="flex items-center gap-3.5">
          <span className="h-3.5 w-1 border border-l-0 border-[#b8c8d0] bg-[#3c8ab4]" />
          <Caret color="#fff" />
        </button>
      ))}
    </div>
  </aside>
);

// ---------- Windows ----------

const PartWindow = () => (
  <section className="flex min-h-0 min-w-0 flex-col">
    <Caption title="Aruthy X Saheed _ Heart Design.SLDPRT" />
    <div className="flex min-h-0 flex-1 border-x-8 border-[#d8e5f2]">
      <div className="flex w-[417px] shrink-0 flex-col bg-[#4a4a4a]">
        <PanelGrip />
        <ManagerTabs selected={2} />
        <h3 className="mr-0.5 flex h-[38px] shrink-0 items-center justify-center border-b border-[#8a8a8a] pt-0.5 text-sm font-bold text-white">
          Configurations
        </h3>
        <ul className="mr-0.5 min-h-0 flex-1 overflow-hidden pt-[11px] text-sm whitespace-pre text-[#f0f0f0]">
          <li className="flex h-6 items-center gap-1 pl-1">
            <Expander down />
            <span className="w-1 shrink-0" />
            <PartIcon />
            <CapIcon />
            <span className="pl-0.5">Aruthy X Saheed _ Heart Design Configuration(s)  (R</span>
          </li>
          <li className="flex h-6 items-center gap-1 pl-7">
            <Expander />
            <span className="w-1 shrink-0" />
            <TablesIcon />
            <span>Tables</span>
          </li>
          {configs.map(({ name, state }) => (
            <li
              key={name}
              className={clsx('flex h-6 items-center gap-2 pl-12', state === 'active' ? 'text-white' : 'text-[#858585]')}
            >
              <BranchIcon active={state === 'active'} />
              <span className="flex items-center gap-1.5">
                <StateIcon state={state} />
                <span>{name} [ Aruthy X Saheed _ Heart Design ]</span>
              </span>
            </li>
          ))}
        </ul>
        <div className="mr-0.5 flex h-[21px] shrink-0 items-center bg-[#f0f0f0] pr-[51px] pl-[19px]">
          <div className="h-[3px] w-full rounded-full bg-[#858585]" />
        </div>
        <h3 className="mr-0.5 flex h-[30px] shrink-0 items-center justify-center border-y border-[#8a8a8a] text-sm font-bold text-white">
          Display States
        </h3>
        <div className="flex h-[62px] shrink-0 items-start gap-1.5 pt-[3px] pl-6 text-sm text-[#f0f0f0]">
          <StateBallIcon />
          <span>{'<Default>_Display State 1'}</span>
        </div>
      </div>
      <Viewport>
        <HeartModel />
        <AxisTriad />
        <SideHandle />
      </Viewport>
    </div>
  </section>
);

const AssemblyWindow = () => (
  <section className="flex min-h-0 min-w-0 flex-col">
    <Caption title="Aruthy X Saheed_ Half Heart.SLDASM *" active />
    <div className="flex min-h-0 flex-1 border-l-8 border-[#bad3ec]">
      <div className="flex w-[394px] shrink-0 flex-col bg-[#4a4a4a]">
        <PanelGrip />
        <ManagerTabs selected={0} assembly />
        <div className="mx-[3px] flex h-8 shrink-0 items-center gap-px border border-[#8a8a8a] bg-[#575757] pl-0.5">
          <button aria-label="Filter" className="flex items-center gap-px">
            <FilterIcon />
            <span className="pt-2">
              <Caret color="#fff" />
            </span>
          </button>
          <input aria-label="Filter tree" className="h-full min-w-0 flex-1 bg-transparent px-1 text-sm text-white outline-none" />
        </div>
        <div className="mr-0.5 flex min-h-0 flex-1">
          <ul className="min-w-0 flex-1 overflow-hidden text-sm whitespace-pre text-[#f0f0f0]">
            {features.map(({ name, icon, open }) => (
              <li key={name} className="flex h-6 items-center gap-1 pl-7 text-[#858585]">
                <Expander hidden={!open} />
                <span className="w-1 shrink-0" />
                <FeatureIcon kind={icon} />
                <span>{name}</span>
              </li>
            ))}
            <li className="flex h-6 items-center gap-1.5 pl-[25px]">
              <PartIcon gray />
              <span>{'Aruthy X Saheed _ Heart Design<8> (Microcontro'}</span>
            </li>
            {components.map((name) => (
              <li key={name} className="flex h-6 items-center gap-1 pl-[5px]">
                <Expander />
                <span className="w-1 shrink-0" />
                <PartIcon />
                <CapIcon />
                <span className="pl-0.5">{name}</span>
              </li>
            ))}
            <li className="flex h-6 items-center gap-1 pl-[25px]">
              <PartIcon />
              <CapIcon />
            </li>
          </ul>
          <div className="flex w-[18px] shrink-0 justify-center bg-[#f0f0f0] pt-[363px]">
            <div className="h-[193px] w-[3px] rounded-full bg-[#858585]" />
          </div>
        </div>
        <div className="mr-0.5 flex h-4 shrink-0 items-center bg-[#f0f0f0] pt-1 pl-5">
          <div className="h-[3px] w-[196px] rounded-full bg-[#858585]" />
        </div>
      </div>
      <Viewport>
        <AssemblyModel />
        <HeadsUpToolbar />
        <AxisTriad />
        <TaskPane />
        <SideHandle />
      </Viewport>
    </div>
  </section>
);

const App: React.FC = () => (
  <div className="flex h-screen flex-col overflow-hidden bg-[#4a4a4a] font-['Open_Sans',sans-serif]">
    {/* Bottom edge of the ribbon, with its group dividers */}
    <div className="grid h-[11px] shrink-0 grid-cols-[178px_175px_227px_468px_196px_1fr] pb-0.5">
      {[1, 2, 3, 4, 5].map((i) => (
        <div key={i} className="border-r border-[#8a8a8a]" />
      ))}
    </div>

    <nav className="flex h-[29px] shrink-0 text-sm text-[#f2f2f2]">
      {ribbonTabs.map(({ label, width }) => (
        <button
          key={label}
          className={clsx(
            'shrink-0 border-y border-r border-[#8a8a8a] bg-[#323232] whitespace-nowrap',
            label === 'ut' && 'pr-2',
            width,
          )}
        >
          {label}
        </button>
      ))}
      <button className="w-[77px] shrink-0 border-r border-b border-[#8a8a8a] font-bold">Kenesto</button>
      <div className="flex-1 border-t border-[#8a8a8a] bg-[#505050]" />
    </nav>

    <main className="flex min-h-0 flex-1">
      <ToolStrip />
      <div className="-mr-[17px] grid min-w-0 flex-1 grid-cols-[876fr_876fr] grid-rows-1 gap-0.5 bg-[#3a3a3a] pt-[3px]">
        <PartWindow />
        <AssemblyWindow />
      </div>
    </main>
  </div>
);

export default App;
